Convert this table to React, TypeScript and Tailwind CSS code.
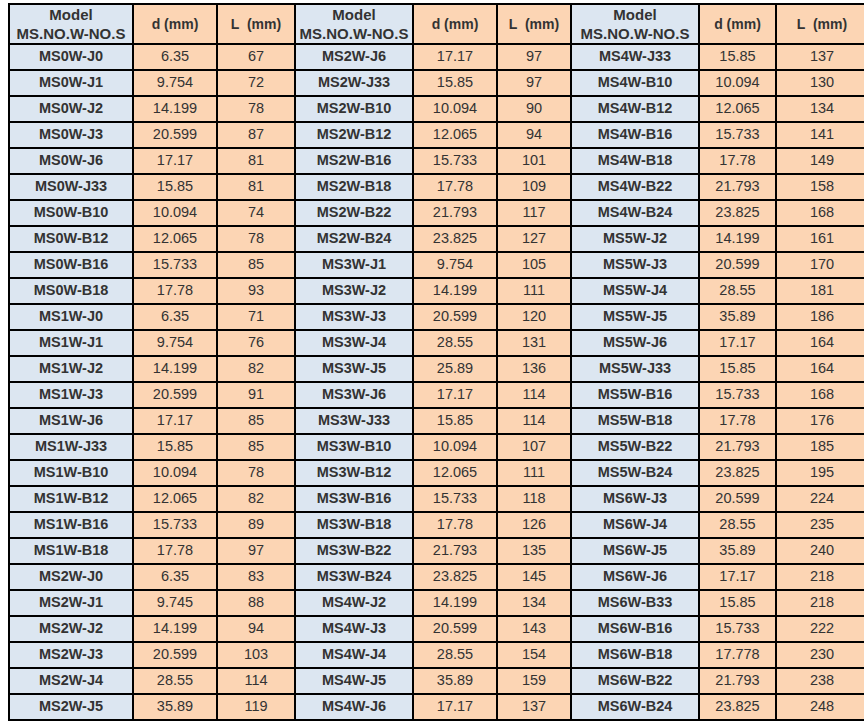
const groups: [string, string, string][][] = [
  [
    ['MS0W-J0', '6.35', '67'],
    ['MS0W-J1', '9.754', '72'],
    ['MS0W-J2', '14.199', '78'],
    ['MS0W-J3', '20.599', '87'],
    ['MS0W-J6', '17.17', '81'],
    ['MS0W-J33', '15.85', '81'],
    ['MS0W-B10', '10.094', '74'],
    ['MS0W-B12', '12.065', '78'],
    ['MS0W-B16', '15.733', '85'],
    ['MS0W-B18', '17.78', '93'],
    ['MS1W-J0', '6.35', '71'],
    ['MS1W-J1', '9.754', '76'],
    ['MS1W-J2', '14.199', '82'],
    ['MS1W-J3', '20.599', '91'],
    ['MS1W-J6', '17.17', '85'],
    ['MS1W-J33', '15.85', '85'],
    ['MS1W-B10', '10.094', '78'],
    ['MS1W-B12', '12.065', '82'],
    ['MS1W-B16', '15.733', '89'],
    ['MS1W-B18', '17.78', '97'],
    ['MS2W-J0', '6.35', '83'],
    ['MS2W-J1', '9.745', '88'],
    ['MS2W-J2', '14.199', '94'],
    ['MS2W-J3', '20.599', '103'],
    ['MS2W-J4', '28.55', '114'],
    ['MS2W-J5', '35.89', '119'],
  ],
  [
    ['MS2W-J6', '17.17', '97'],
    ['MS2W-J33', '15.85', '97'],
    ['MS2W-B10', '10.094', '90'],
    ['MS2W-B12', '12.065', '94'],
    ['MS2W-B16', '15.733', '101'],
    ['MS2W-B18', '17.78', '109'],
    ['MS2W-B22', '21.793', '117'],
    ['MS2W-B24', '23.825', '127'],
    ['MS3W-J1', '9.754', '105'],
    ['MS3W-J2', '14.199', '111'],
    ['MS3W-J3', '20.599', '120'],
    ['MS3W-J4', '28.55', '131'],
    ['MS3W-J5', '25.89', '136'],
    ['MS3W-J6', '17.17', '114'],
    ['MS3W-J33', '15.85', '114'],
    ['MS3W-B10', '10.094', '107'],
    ['MS3W-B12', '12.065', '111'],
    ['MS3W-B16', '15.733', '118'],
    ['MS3W-B18', '17.78', '126'],
    ['MS3W-B22', '21.793', '135'],
    ['MS3W-B24', '23.825', '145'],
    ['MS4W-J2', '14.199', '134'],
    ['MS4W-J3', '20.599', '143'],
    ['MS4W-J4', '28.55', '154'],
    ['MS4W-J5', '35.89', '159'],
    ['MS4W-J6', '17.17', '137'],
  ],
  [
    ['MS4W-J33', '15.85', '137'],
    ['MS4W-B10', '10.094', '130'],
    ['MS4W-B12', '12.065', '134'],
    ['MS4W-B16', '15.733', '141'],
    ['MS4W-B18', '17.78', '149'],
    ['MS4W-B22', '21.793', '158'],
    ['MS4W-B24', '23.825', '168'],
    ['MS5W-J2', '14.199', '161'],
    ['MS5W-J3', '20.599', '170'],
    ['MS5W-J4', '28.55', '181'],
    ['MS5W-J5', '35.89', '186'],
    ['MS5W-J6', '17.17', '164'],
    ['MS5W-J33', '15.85', '164'],
    ['MS5W-B16', '15.733', '168'],
    ['MS5W-B18', '17.78', '176'],
    ['MS5W-B22', '21.793', '185'],
    ['MS5W-B24', '23.825', '195'],
    ['MS6W-J3', '20.599', '224'],
    ['MS6W-J4', '28.55', '235'],
    ['MS6W-J5', '35.89', '240'],
    ['MS6W-J6', '17.17', '218'],
    ['MS6W-B33', '15.85', '218'],
    ['MS6W-B16', '15.733', '222'],
    ['MS6W-B18', '17.778', '230'],
    ['MS6W-B22', '21.793', '238'],
    ['MS6W-B24', '23.825', '248'],
  ],
]

// column widths, measured between grid lines
const widths = [124, 84, 78, 118, 84, 74, 128, 77, 92]

const blue = 'bg-[#dce6f1]'
const orange = 'bg-[#fcd5b4]'
const cell = 'border-2 border-black p-0 text-center align-middle'

export default function App() {
  const rows = groups[0].map((_, i) => groups.flatMap(g => g[i]))

  return (
    <div className="h-[724px] w-[864px] overflow-hidden bg-white pl-[8px] pt-[3px] font-['Liberation_Sans',Arial,sans-serif] text-[14.5px] text-[#333]">
      <table className="table-fixed border-collapse" style={{ width: widths.reduce((a, b) => a + b, 0) }}>
        <colgroup>
          {widths.map((w, i) => (
            <col key={i} style={{ width: w }} />
          ))}
        </colgroup>
        <thead>
          <tr className="h-[40px]">
            {[0, 1, 2].map(g => (
              <Header key={g} />
            ))}
          </tr>
        </thead>
        <tbody>
          {rows.map((row, i) => (
            <tr key={i} className="h-[26px]">
              {row.map((v, j) => (
                <td
                  key={j}
                  className={`${cell} ${j % 3 === 0 ? `${blue} font-bold` : orange}`}
                >
                  {v}
                </td>
              ))}
            </tr>
          ))}
        </tbody>
      </table>
    </div>
  )
}

function Header() {
  return (
    <>
      <th className={`${cell} ${blue} text-[15px] font-bold leading-[19px]`}>
        Model
        <br />
        MS.NO.W-NO.S
      </th>
      <th className={`${cell} ${orange} text-[14px] font-bold`}>d (mm)</th>
      <th className={`${cell} ${orange} whitespace-pre text-[14px] font-bold`}>{'L  (mm)'}</th>
    </>
  )
}
